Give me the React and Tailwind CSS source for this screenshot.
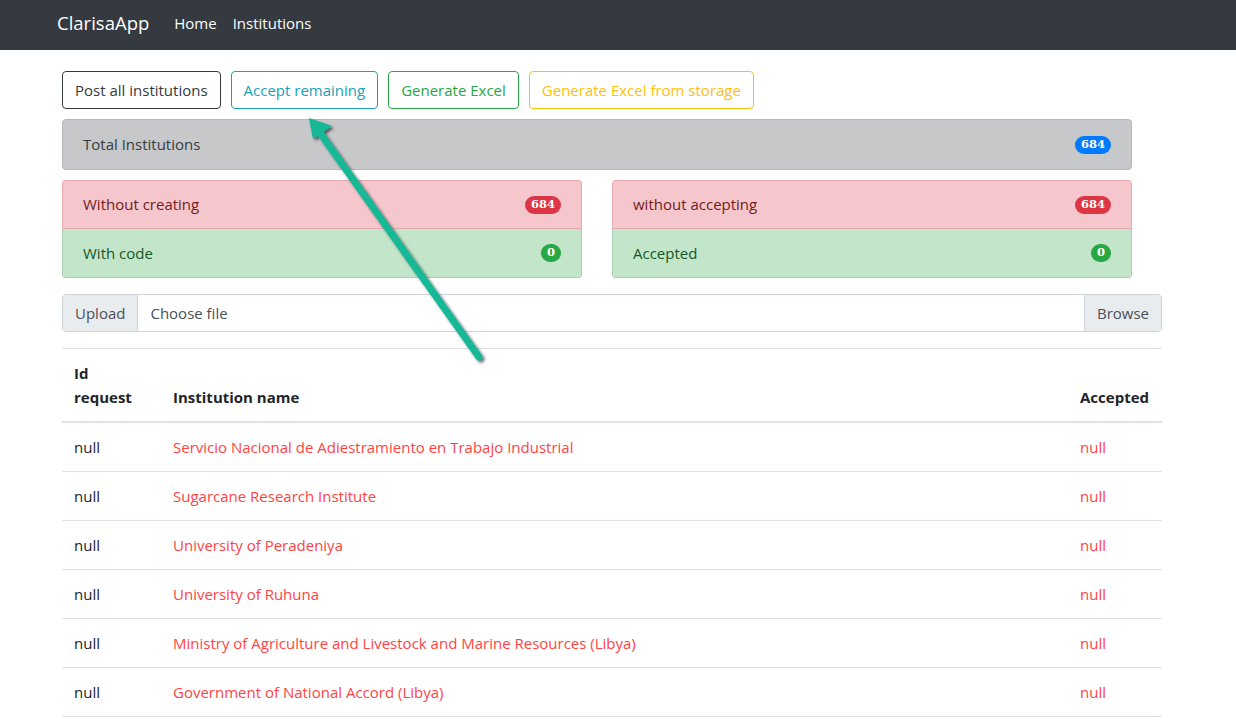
import React from "react";

const rows = [
  "Servicio Nacional de Adiestramiento en Trabajo Industrial",
  "Sugarcane Research Institute",
  "University of Peradeniya",
  "University of Ruhuna",
  "Ministry of Agriculture and Livestock and Marine Resources (Libya)",
  "Government of National Accord (Libya)",
];

function Badge({ color, children }) {
  return (
    <span className={`inline-flex h-[18px] items-center rounded-full px-[6px] text-[11.5px] font-bold leading-none text-white ${color}`} style={{ fontFamily: '"DejaVu Serif", serif' }}>
      {children}
    </span>
  );
}

export default function App() {
  return (
    <div className="relative min-h-[721px] bg-white text-[#212529]" style={{ fontFamily: '"Open Sans", sans-serif' }}>
      <nav className="flex h-[50px] items-center bg-[#343a40] pb-[4px] pl-[57px]">
        <span className="text-[18.5px] leading-[30px] text-white">ClarisaApp</span>
        <span className="ml-[25px] text-[15px] text-white">Home</span>
        <span className="ml-[16px] text-[15px] text-white">Institutions</span>
      </nav>

      <div className="ml-[62px] w-[1100px] pt-[21px] text-[15px]">
        <div className="flex gap-[10px]">
          <button className="h-[38px] rounded-[4px] border border-[#343a40] px-[12px] text-[#343a40]">Post all institutions</button>
          <button className="h-[38px] rounded-[4px] border border-[#17a2b8] px-[12px] text-[#17a2b8]">Accept remaining</button>
          <button className="h-[38px] rounded-[4px] border border-[#28a745] px-[12px] text-[#28a745]">Generate Excel</button>
          <button className="h-[38px] rounded-[4px] border border-[#ffc107] px-[12px] text-[#ffc107]">Generate Excel from storage</button>
        </div>

        <div className="mt-[10px] flex h-[51px] w-[1070px] items-center justify-between rounded-[4px] border border-[#b3b7bb] bg-[#c6c8ca] pl-[20px] pr-[20px] text-[#383d41]">
          <span>Total Institutions</span>
          <Badge color="bg-[#007bff]">684</Badge>
        </div>

        <div className="mt-[10px] flex w-[1070px] gap-[30px]">
          {[["Without creating", "With code"], ["without accepting", "Accepted"]].map(([a, b]) => (
            <div key={a} className="flex-1 overflow-hidden rounded-[4px]">
              <div className="flex h-[49px] items-center justify-between border border-[#e4a9b0] bg-[#f5c6cb] px-[20px] text-[#721c24]">
                <span>{a}</span>
                <Badge color="bg-[#dc3545]">684</Badge>
              </div>
              <div className="flex h-[49px] items-center justify-between border border-t-0 border-[#a8d0b2] bg-[#c3e6cb] px-[20px] text-[#155724]">
                <span>{b}</span>
                <Badge color="bg-[#28a745]">0</Badge>
              </div>
            </div>
          ))}
        </div>

        <div className="mt-[16px] flex h-[38px] rounded-[4px] border border-[#ced4da] text-[#495057]">
          <div className="flex items-center border-r border-[#ced4da] bg-[#e9ecef] px-[12px]">Upload</div>
          <div className="flex flex-1 items-center px-[12px]">Choose file</div>
          <div className="flex items-center border-l border-[#ced4da] bg-[#e9ecef] px-[12px]">Browse</div>
        </div>

        <table className="mt-[16px] w-full border-collapse">
          <thead>
            <tr className="border-t border-[#dee2e6]">
              <th className="w-[99px] border-b-2 border-[#dee2e6] px-[12px] pb-[12px] pt-[12px] text-left align-bottom font-bold leading-[24px]">Id<br />request</th>
              <th className="border-b-2 border-[#dee2e6] px-[12px] pb-[12px] text-left align-bottom font-bold leading-[24px]">Institution name</th>
              <th className="w-[94px] border-b-2 border-[#dee2e6] px-[12px] pb-[12px] text-left align-bottom font-bold leading-[24px]">Accepted</th>
            </tr>
          </thead>
          <tbody>
            {rows.map((r) => (
              <tr key={r} className="h-[49px] border-b border-[#dee2e6]">
                <td className="px-[12px] leading-[24px]">null</td>
                <td className="px-[12px] leading-[24px] text-[#f44]">{r}</td>
                <td className="px-[12px] leading-[24px] text-[#f44]">null</td>
              </tr>
            ))}
          </tbody>
        </table>
      </div>

      <svg className="pointer-events-none absolute left-0 top-0" width="1236" height="721">
        <defs>
          <filter id="sh" x="-20%" y="-20%" width="140%" height="140%">
            <feDropShadow dx="2" dy="2" stdDeviation="1.5" floodColor="#000" floodOpacity="0.6" />
          </filter>
        </defs>
        <g filter="url(#sh)">
          <line x1="479" y1="357" x2="318" y2="130" stroke="#13b896" strokeWidth="7" strokeLinecap="round" />
          <polygon points="309,118 332,126 313,139" fill="#13b896" />
        </g>
      </svg>
    </div>
  );
}
